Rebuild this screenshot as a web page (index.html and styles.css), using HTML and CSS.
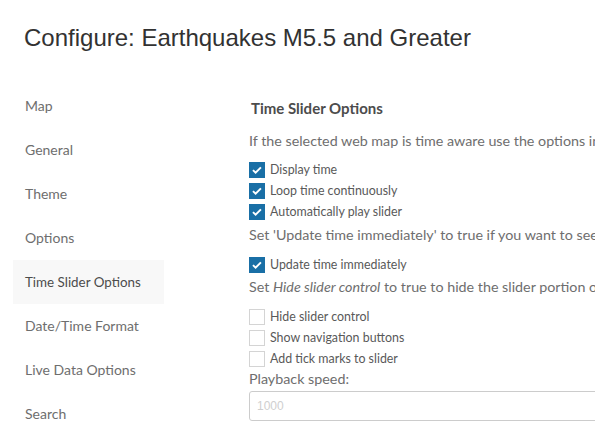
FILE: index.html
```html
<!DOCTYPE html>
<html>
<head>
<meta charset="utf-8">
<link rel="stylesheet" href="styles.css">
</head>
<body>
<header class="header"><h1 class="title">Configure: Earthquakes M5.5 and Greater</h1></header>
<div class="layout">
  <nav class="sidebar">
    <div class="nav-item">Map</div>
    <div class="nav-item">General</div>
    <div class="nav-item">Theme</div>
    <div class="nav-item">Options</div>
    <div class="nav-item active">Time Slider Options</div>
    <div class="nav-item">Date/Time Format</div>
    <div class="nav-item">Live Data Options</div>
    <div class="nav-item">Search</div>
  </nav>
  <main class="main">
    <h2 class="section-title">Time Slider Options</h2>
    <p class="desc d1">If the selected web map is time aware use the options in this section to configure the time slider.</p>
    <div class="checks">
      <label class="check"><span class="box on"><svg viewBox="0 0 16 16"><path d="M3.4 8.2l3 2.9 6.1-6.1" fill="none" stroke="#fff" stroke-width="2.2"/></svg></span>Display time</label>
      <label class="check"><span class="box on"><svg viewBox="0 0 16 16"><path d="M3.4 8.2l3 2.9 6.1-6.1" fill="none" stroke="#fff" stroke-width="2.2"/></svg></span>Loop time continuously</label>
      <label class="check"><span class="box on"><svg viewBox="0 0 16 16"><path d="M3.4 8.2l3 2.9 6.1-6.1" fill="none" stroke="#fff" stroke-width="2.2"/></svg></span>Automatically play slider</label>
    </div>
    <p class="desc d2">Set 'Update time immediately' to true if you want to see the map update as the slider moves.</p>
    <div class="checks">
      <label class="check"><span class="box on"><svg viewBox="0 0 16 16"><path d="M3.4 8.2l3 2.9 6.1-6.1" fill="none" stroke="#fff" stroke-width="2.2"/></svg></span>Update time immediately</label>
    </div>
    <p class="desc d3">Set <em>Hide slider control</em> to true to hide the slider portion of the time slider.</p>
    <div class="checks">
      <label class="check"><span class="box"></span>Hide slider control</label>
      <label class="check"><span class="box"></span>Show navigation buttons</label>
      <label class="check"><span class="box"></span>Add tick marks to slider</label>
    </div>
    <div class="field-label">Playback speed:</div>
    <div class="input">1000</div>
  </main>
</div>
</body>
</html>
```
FILE: styles.css
```css
html, body {
  margin: 0;
  padding: 0;
  background: #fff;
  overflow: hidden;
}
body {
  width: 595px;
  height: 437px;
  font-family: Lato, "Open Sans", sans-serif;
  color: #6e6e6e;
}
.header {
  height: 84px;
  box-sizing: border-box;
  padding: 24px 0 0 24px;
}
.title {
  margin: 0;
  font-family: "Liberation Sans", Arial, sans-serif;
  font-weight: normal;
  font-size: 24px;
  line-height: 28px;
  color: #323232;
}
.layout {
  display: flex;
}
.sidebar {
  flex: 0 0 151px;
  margin-left: 13px;
  margin-right: 85px;
  display: flex;
  flex-direction: column;
}
.nav-item {
  height: 44px;
  line-height: 44px;
  padding-left: 12px;
  font-size: 14px;
  color: #6e6e6e;
  white-space: nowrap;
}
.nav-item.active {
  background: #f8f8f8;
  color: #4c4c4c;
  font-size: 13.4px;
}
.main {
  flex: 1;
  min-width: 0;
  padding-top: 14px;
  white-space: nowrap;
  overflow: hidden;
}
.section-title {
  margin: 0 0 0 2px;
  font-size: 15px;
  font-weight: bold;
  line-height: 20px;
  color: #4c4c4c;
}
.desc {
  margin: 0;
  font-size: 14.3px;
  line-height: 20px;
  color: #6e6e6e;
}
.desc.d1 { margin-top: 13px; margin-bottom: 8px; }
.desc.d2 { margin-top: 3px; margin-bottom: 9px; }
.desc.d3 { margin-top: 2px; margin-bottom: 9px; }
.desc em { font-style: italic; }
.checks {
  display: flex;
  flex-direction: column;
}
.check {
  display: flex;
  align-items: center;
  gap: 5px;
  height: 21px;
  font-size: 12.4px;
  color: #595959;
}
.box {
  width: 16px;
  height: 16px;
  box-sizing: border-box;
  border: 1px solid #d4d4d4;
  background: #fff;
  display: inline-flex;
}
.box.on {
  background: #196fa6;
  border-color: #196fa6;
}
.box svg {
  width: 14px;
  height: 14px;
}
.field-label {
  font-size: 14.3px;
  line-height: 20px;
  color: #6e6e6e;
  margin-bottom: 2px;
}
.input {
  height: 30px;
  box-sizing: border-box;
  border: 1px solid #cccccc;
  border-radius: 3px;
  padding-left: 7px;
  font-family: "Liberation Sans", Arial, sans-serif;
  font-size: 12px;
  line-height: 28px;
  color: #cfcfcf;
  width: 400px;
}
```
